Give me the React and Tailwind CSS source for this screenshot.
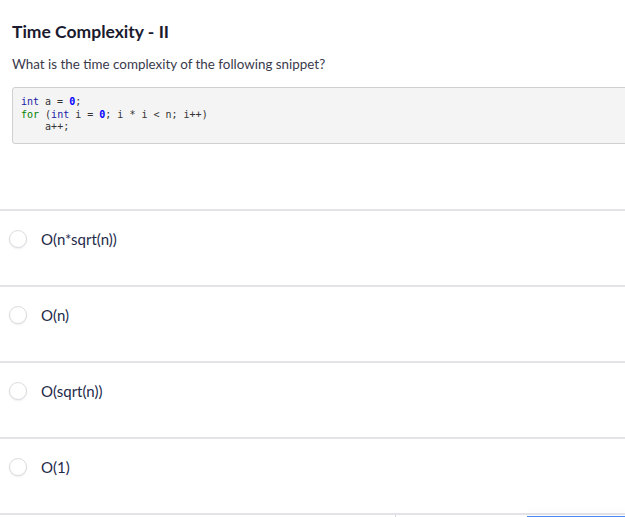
import React from "react";

const options = ["O(n*sqrt(n))", "O(n)", "O(sqrt(n))", "O(1)"];

const Radio = () => (
  <span className="block w-[18px] h-[18px] rounded-full border border-[#dcdce2] bg-white shadow-[0_1px_2px_rgba(0,0,0,0.08)] shrink-0" />
);

const App = () => {
  return (
    <div className="w-[625px] h-[517px] overflow-hidden bg-white font-['Lato',sans-serif]">
      <div className="pl-3 pt-5">
        <h1 className="text-[17.5px] leading-6 font-bold text-[#1b1b2f]">
          Time Complexity - II
        </h1>
        <p className="mt-[11px] text-[13.4px] leading-[18px] text-[#3a3a4c]">
          What is the time complexity of the following snippet?
        </p>
        <div className="mt-[14px] w-[640px] h-[57px] border border-[#cfcfcf] rounded-[3px] bg-[#f4f4f4] pl-2 pt-2 font-['DejaVu_Sans_Mono',monospace] text-[10px] leading-[12.5px] text-[#333] whitespace-pre">
          <div>
            <span className="text-[#1a1aa6]">int</span> a = <span className="text-[#0000ff] font-bold">0</span>;
          </div>
          <div>
            <span className="text-[#008000]">for</span> (<span className="text-[#1a1aa6]">int</span> i = <span className="text-[#0000ff] font-bold">0</span>; i * i &lt; n; i++)
          </div>
          <div>{"    "}a++;</div>
        </div>
      </div>

      <div className="mt-[65px]">
        {options.map((opt) => (
          <div
            key={opt}
            className="h-[76px] border-t-2 border-[#e2e2e8] pl-[9px] pt-[19px]"
          >
            <label className="flex items-center gap-[14px] h-[18px] cursor-pointer">
              <Radio />
              <span className="text-[15px] leading-[18px] text-[#1e2a4a]">
                {opt}
              </span>
            </label>
          </div>
        ))}
        <div className="border-t-2 border-[#e2e2e8] flex h-[3px]">
          <div className="ml-[395px] w-px h-[2px] bg-[#d6d6dc]" />
          <div className="ml-auto w-[98px] h-[2px] mt-px bg-[#4a8af0] shadow-[0_-4px_8px_rgba(0,0,0,0.06)]" />
        </div>
      </div>
    </div>
  );
};

export default App;
